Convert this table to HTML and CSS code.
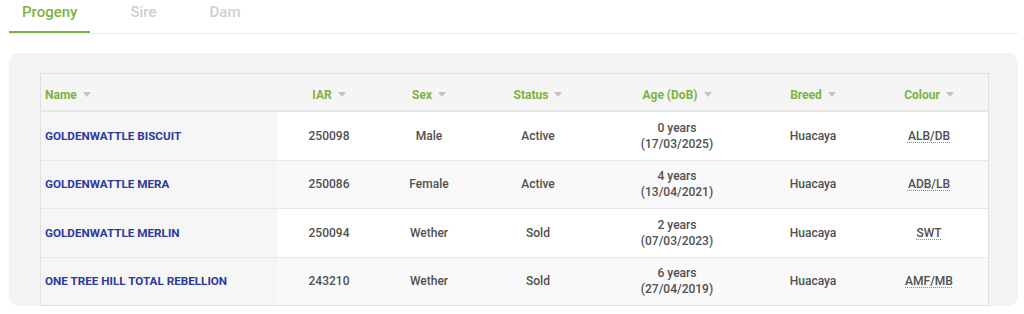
FILE: index.html
```html
<!DOCTYPE html>
<html lang="en">
<head>
    <meta charset="UTF-8">
    <meta name="viewport" content="width=device-width, initial-scale=1.0">
    <title>Progeny</title>
    <link rel="stylesheet" href="styles.css">
</head>
<body>
    <div class="page">
        <nav class="tabs">
            <a href="#" class="tab active">Progeny</a>
            <a href="#" class="tab">Sire</a>
            <a href="#" class="tab">Dam</a>
        </nav>

        <div class="panel">
            <table class="progeny-table">
                <thead>
                    <tr>
                        <th class="col-name">Name <span class="sort"></span></th>
                        <th class="col-iar">IAR <span class="sort"></span></th>
                        <th class="col-sex">Sex <span class="sort"></span></th>
                        <th class="col-status">Status <span class="sort"></span></th>
                        <th class="col-age">Age (DoB) <span class="sort"></span></th>
                        <th class="col-breed">Breed <span class="sort"></span></th>
                        <th class="col-colour">Colour <span class="sort"></span></th>
                    </tr>
                </thead>
                <tbody>
                    <tr>
                        <td class="col-name"><a href="#">GOLDENWATTLE BISCUIT</a></td>
                        <td>250098</td>
                        <td>Male</td>
                        <td>Active</td>
                        <td class="col-age">0 years<br>(17/03/2025)</td>
                        <td>Huacaya</td>
                        <td><abbr title="Light Brown / Dark Brown">ALB/DB</abbr></td>
                    </tr>
                    <tr>
                        <td class="col-name"><a href="#">GOLDENWATTLE MERA</a></td>
                        <td>250086</td>
                        <td>Female</td>
                        <td>Active</td>
                        <td class="col-age">4 years<br>(13/04/2021)</td>
                        <td>Huacaya</td>
                        <td><abbr title="Dark Brown / Light Brown">ADB/LB</abbr></td>
                    </tr>
                    <tr>
                        <td class="col-name"><a href="#">GOLDENWATTLE MERLIN</a></td>
                        <td>250094</td>
                        <td>Wether</td>
                        <td>Sold</td>
                        <td class="col-age">2 years<br>(07/03/2023)</td>
                        <td>Huacaya</td>
                        <td><abbr title="Solid White">SWT</abbr></td>
                    </tr>
                    <tr>
                        <td class="col-name"><a href="#">ONE TREE HILL TOTAL REBELLION</a></td>
                        <td>243210</td>
                        <td>Wether</td>
                        <td>Sold</td>
                        <td class="col-age">6 years<br>(27/04/2019)</td>
                        <td>Huacaya</td>
                        <td><abbr title="Medium Fawn / Medium Brown">AMF/MB</abbr></td>
                    </tr>
                </tbody>
            </table>
        </div>
    </div>
</body>
</html>
```

FILE: styles.css
```css
:root {
    --green: #7cb342;
    --blue: #2b3a9e;
    --text: #505050;
    --line: #e0e0e0;
    --panel-bg: #f3f3f3;
}

body, html {
    margin: 0;
    padding: 0;
    font-family: 'Roboto', 'Liberation Sans', sans-serif;
    background-color: #ffffff;
    color: var(--text);
}

.page {
    padding: 0 6px 0 9px;
}

.tabs {
    display: flex;
    gap: 27px;
    border-bottom: 1px solid #ececec;
    height: 33px;
}

.tab {
    padding: 2px 13px 0;
    font-size: 15px;
    font-weight: 500;
    line-height: 20px;
    color: #cfcfcf;
    text-decoration: none;
    box-sizing: border-box;
    height: 33px;
}

.tab.active {
    color: var(--green);
    border-bottom: 2px solid var(--green);
}

.panel {
    margin-top: 19px;
    background-color: var(--panel-bg);
    border-radius: 10px;
    padding: 20px 29px 0 31px;
}

.progeny-table {
    width: 100%;
    border-collapse: collapse;
    background-color: #ffffff;
    border: 1px solid var(--line);
    font-size: 12px;
}

.progeny-table th {
    height: 30px;
    padding: 6px 5px 0;
    background-color: #f5f5f5;
    color: var(--green);
    font-weight: 700;
    text-align: center;
    border-bottom: 2px solid #e6e6e6;
    white-space: nowrap;
}

.progeny-table td {
    height: 47.5px;
    padding: 0 5px;
    text-align: center;
    font-weight: 500;
    color: var(--text);
    border-top: 1px solid #e8e8e8;
    line-height: 16px;
}

.progeny-table tbody tr:nth-child(even) td {
    background-color: #f9f9f9;
}

.progeny-table th.col-name,
.progeny-table td.col-name {
    text-align: left;
    padding-left: 4px;
}

.progeny-table td.col-name,
.progeny-table tbody tr:nth-child(even) td.col-name {
    background-color: #f6f6f6;
}

.col-name { width: 228px; }
.col-iar { width: 92px; }
.col-sex { width: 88px; }
.col-status { width: 110px; }
.col-age { width: 148px; }
.col-breed { width: 104px; }

.progeny-table td a {
    color: var(--blue);
    font-weight: 700;
    font-size: 11.7px;
    text-decoration: none;
}

.progeny-table abbr {
    text-decoration: underline dotted #888;
    text-underline-offset: 2px;
    cursor: help;
}

.sort {
    display: inline-block;
    width: 0;
    height: 0;
    margin-left: 3px;
    border-left: 4px solid transparent;
    border-right: 4px solid transparent;
    border-top: 5px solid #c4c4c4;
    vertical-align: 2px;
}
```
